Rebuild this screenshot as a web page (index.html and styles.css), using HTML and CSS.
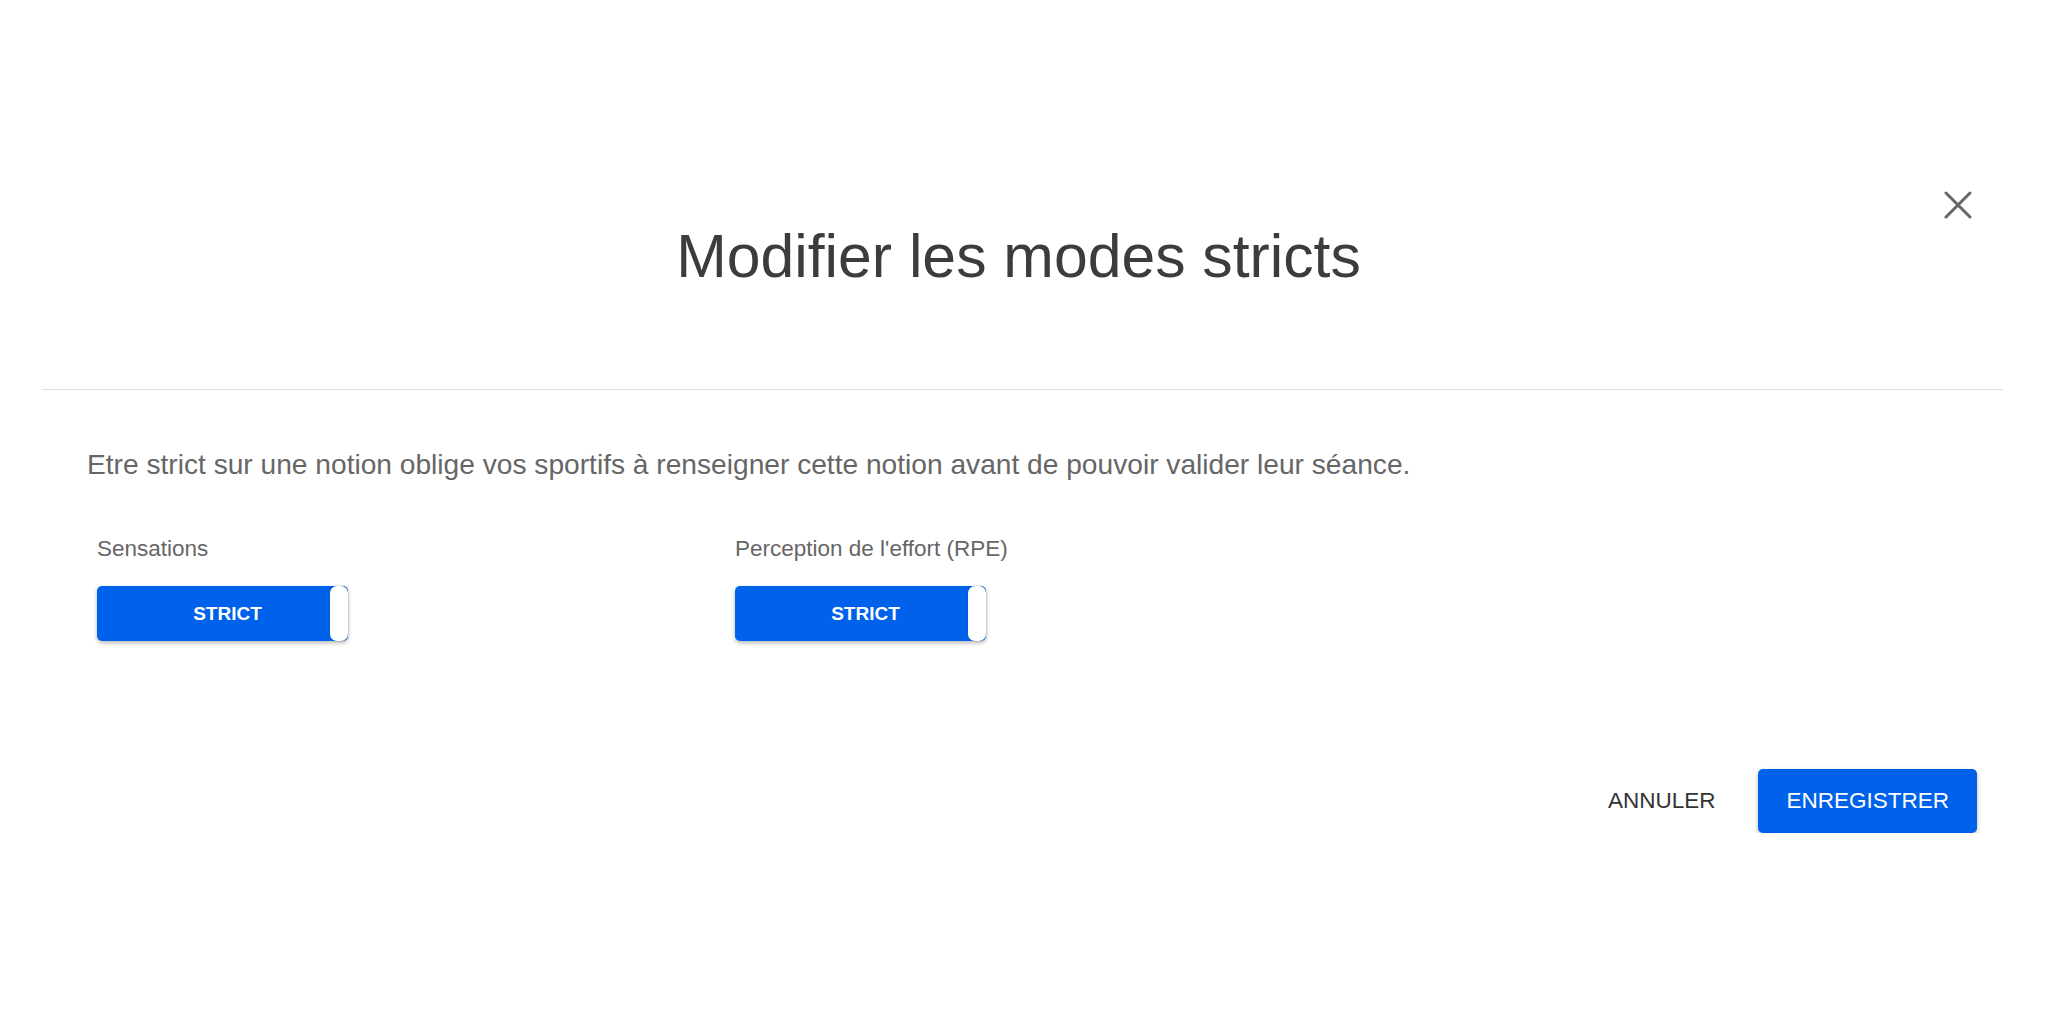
FILE: index.html
```html
<!DOCTYPE html>
<html lang="fr">

<head>
    <title>Modifier les modes stricts</title>
    <meta name="viewport" content="width=device-width, initial-scale=1" />
    <link rel="stylesheet" href="styles.css">
</head>

<body>
    <div class="modal">
        <header class="modal-header">
            <h1 class="modal-title">Modifier les modes stricts</h1>
            <button class="close" aria-label="Fermer">
                <svg width="28" height="28" viewBox="0 0 28 28">
                    <path d="M2 2 L26 26 M26 2 L2 26" stroke="#666" stroke-width="3" stroke-linecap="round" fill="none" />
                </svg>
            </button>
        </header>

        <div class="modal-body">
            <p class="intro">Etre strict sur une notion oblige vos sportifs à renseigner cette notion avant de pouvoir valider leur séance.</p>
            <div class="fields">
                <div class="field">
                    <label class="field-label">Sensations</label>
                    <button class="toggle">
                        <span class="toggle-text">STRICT</span>
                        <span class="toggle-thumb"></span>
                    </button>
                </div>
                <div class="field">
                    <label class="field-label">Perception de l'effort (RPE)</label>
                    <button class="toggle">
                        <span class="toggle-text">STRICT</span>
                        <span class="toggle-thumb"></span>
                    </button>
                </div>
            </div>
        </div>

        <footer class="modal-actions">
            <button class="btn btn-flat">ANNULER</button>
            <button class="btn btn-primary">ENREGISTRER</button>
        </footer>
    </div>
</body>

</html>
```

FILE: styles.css
```css
body {
    margin: 0;
    background: #fff;
    font-family: "Liberation Sans", Arial, Helvetica, sans-serif;
}

.modal {
    position: relative;
}

.modal-header {
    margin: 0 45px 0 42px;
    padding: 220px 0 97px;
    border-bottom: 1px solid #dddddd;
}

.modal-title {
    margin: 0;
    padding-right: 8px;
    font-size: 60.7px;
    line-height: 72px;
    font-weight: normal;
    text-align: center;
    color: #3c3c3c;
}

.close {
    position: absolute;
    top: 191px;
    right: 76px;
    width: 28px;
    height: 28px;
    padding: 0;
    border: none;
    background: none;
}

.close svg {
    display: block;
}

.modal-body {
    padding: 58px 0 0 87px;
}

.intro {
    margin: 0;
    font-size: 28.15px;
    line-height: 34px;
    color: #666;
}

.fields {
    display: grid;
    grid-template-columns: 638px 638px;
    margin-top: 53px;
    padding-left: 10px;
}

.field {
    display: flex;
    flex-direction: column;
    align-items: flex-start;
    gap: 24px;
}

.field-label {
    font-size: 22.5px;
    line-height: 27px;
    color: #666;
}

.toggle {
    position: relative;
    width: 251px;
    height: 55px;
    padding: 0 0 0 10px;
    border: none;
    border-radius: 5px;
    background: #0062ea;
    box-shadow: 0 2px 4px rgba(0, 0, 0, 0.28);
    font-family: inherit;
}

.toggle-text {
    display: block;
    font-size: 19px;
    font-weight: 600;
    color: #fff;
    text-align: center;
}

.toggle-thumb {
    position: absolute;
    top: 0;
    right: 0;
    width: 18px;
    height: 55px;
    border-radius: 7px;
    background: #fff;
    box-shadow: 0 0 2px rgba(0, 0, 0, 0.25);
}

.modal-actions {
    display: flex;
    justify-content: flex-end;
    margin-top: 128px;
    padding-right: 71px;
}

.btn {
    height: 64px;
    padding: 0 28px;
    border: none;
    border-radius: 5px;
    font-family: inherit;
    font-size: 22.5px;
}

.btn-flat {
    margin-right: 15px;
    background: none;
    color: #333;
}

.btn-primary {
    background: #0062ea;
    color: #fff;
    box-shadow: 0 2px 4px rgba(0, 0, 0, 0.3);
}
```
